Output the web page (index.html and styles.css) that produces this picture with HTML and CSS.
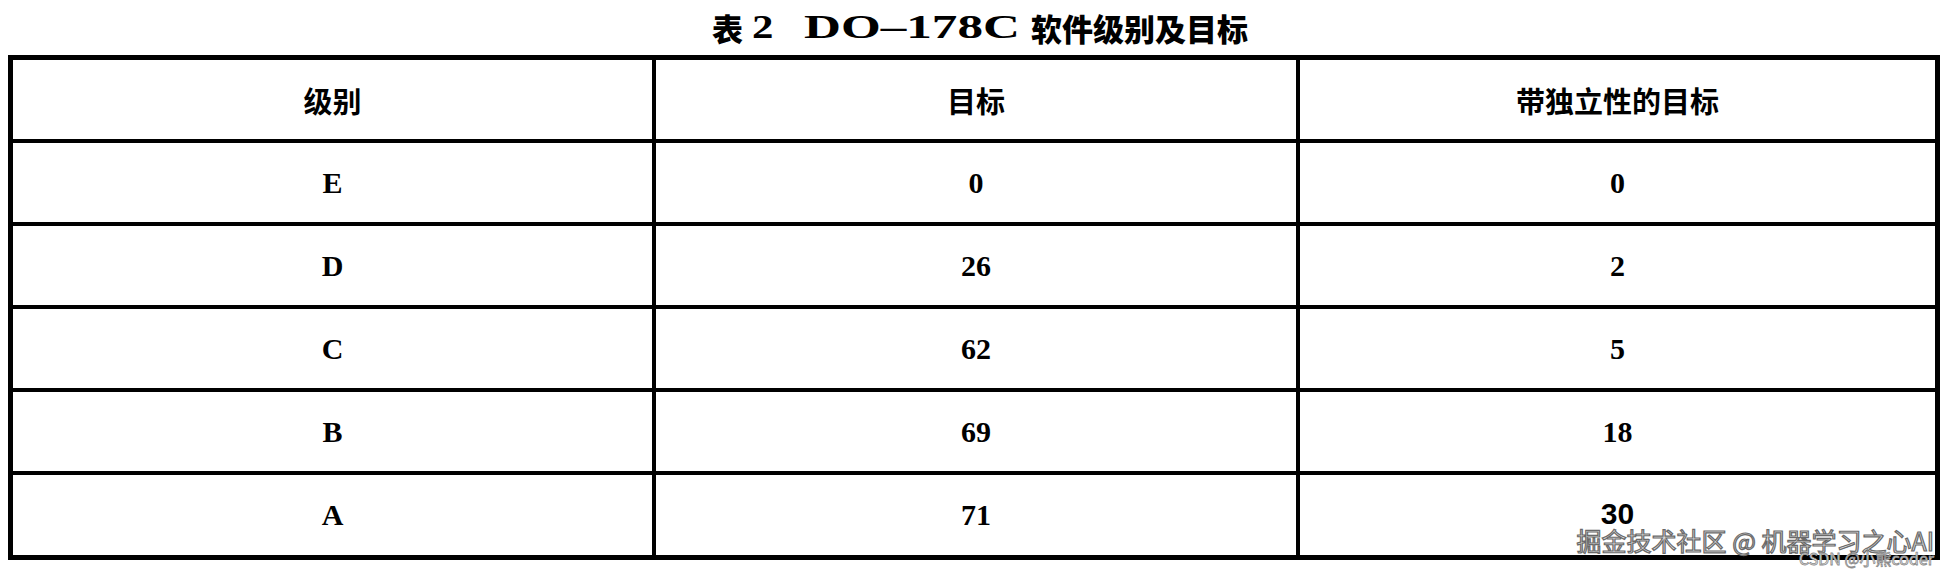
FILE: index.html
```html
<!DOCTYPE html>
<html lang="zh-CN">
<head>
<meta charset="utf-8">
<title>表 2 DO-178C 软件级别及目标</title>
<link rel="stylesheet" href="styles.css">
</head>
<body>
<div class="page">
  <h1 class="title"><span class="cjk">表</span><span class="lat num">2</span><span class="lat code">DO–178C</span><span class="cjk">软件级别及目标</span></h1>
  <table class="grid">
    <colgroup><col class="c1"><col class="c2"><col class="c3"></colgroup>
    <thead>
      <tr><th>级别</th><th>目标</th><th class="last">带独立性的目标</th></tr>
    </thead>
    <tbody>
      <tr><td>E</td><td>0</td><td class="last">0</td></tr>
      <tr><td>D</td><td>26</td><td class="last">2</td></tr>
      <tr><td>C</td><td>62</td><td class="last">5</td></tr>
      <tr><td>B</td><td>69</td><td class="last">18</td></tr>
      <tr class="end"><td>A</td><td>71</td><td class="last"><span class="sans">30</span></td></tr>
    </tbody>
  </table>
  <div class="mark">
    <div class="mark-main">掘金技术社区 @ 机器学习之心AI</div>
    <div class="mark-sub">CSDN @小熊coder</div>
  </div>
</div>
</body>
</html>
```
FILE: styles.css
```css
html, body {
  margin: 0;
  padding: 0;
  background: #ffffff;
}
.page {
  position: relative;
  width: 1960px;
  height: 570px;
  padding-left: 8px;
  box-sizing: border-box;
}
.title {
  margin: 0;
  height: 55px;
  width: 1932px;
  display: flex;
  align-items: center;
  justify-content: center;
  padding-left: 12px;
  box-sizing: border-box;
  color: #000;
  line-height: 1;
}
.title .cjk {
  font-family: "Noto Sans CJK SC", sans-serif;
  font-size: 31px;
  font-weight: 900;
}
.title .lat {
  font-family: "Liberation Serif", serif;
  font-weight: 700;
  font-size: 33px;
}
.title .num {
  display: inline-block;
  transform: scaleX(1.3);
  transform-origin: left center;
  margin-left: 9px;
  margin-right: 35px;
}
.title .code {
  display: inline-block;
  transform: scaleX(1.55);
  transform-origin: left center;
  margin-right: 88px;
}
.grid {
  width: 1932px;
  border: 5px solid #000;
  border-collapse: separate;
  border-spacing: 0;
  table-layout: fixed;
}
.grid col.c1 { width: 643px; }
.grid col.c2 { width: 644px; }
.grid th, .grid td {
  border-right: 4px solid #000;
  border-bottom: 4px solid #000;
  padding: 0;
  height: 79px;
  text-align: center;
  vertical-align: middle;
  color: #000;
}
.grid th.last, .grid td.last { border-right: none; }
.grid tr.end td { border-bottom: none; height: 80px; }
.grid th {
  font-family: "Noto Sans CJK SC", sans-serif;
  font-weight: 700;
  font-size: 29px;
}
.grid td {
  font-family: "Liberation Serif", serif;
  font-weight: 700;
  font-size: 30px;
}
.grid td .sans {
  font-family: "Liberation Sans", sans-serif;
  font-weight: 700;
  font-size: 30px;
  position: relative;
  top: -1px;
}
.mark {
  position: absolute;
  right: 26px;
  bottom: 4px;
  display: flex;
  flex-direction: column;
  align-items: flex-end;
  font-family: "Noto Sans CJK SC", sans-serif;
  line-height: 1;
}
.mark-main {
  font-size: 25px;
  font-weight: 400;
  color: #e2e2e2;
  -webkit-text-stroke: 1.2px #6a6a6a;
  margin-bottom: -3px;
}
.mark-sub {
  font-size: 16px;
  font-weight: 400;
  color: #f2f2f2;
  -webkit-text-stroke: 0.8px #8c8c8c;
}
```
